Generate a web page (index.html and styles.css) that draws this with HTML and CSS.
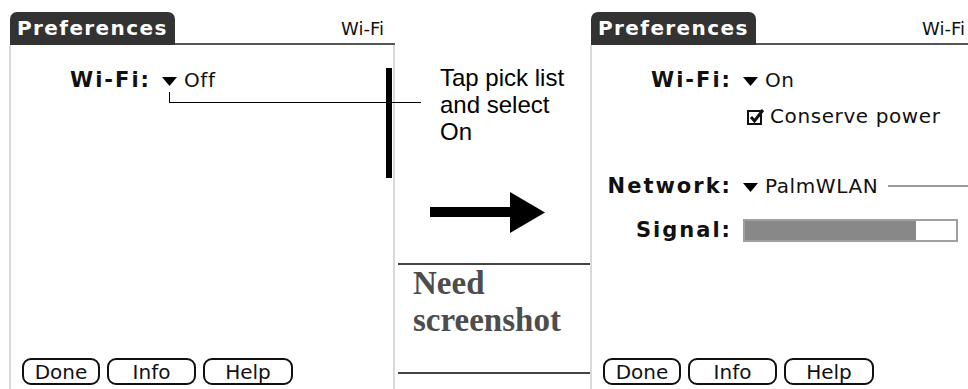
FILE: index.html
```html
<!DOCTYPE html>
<html lang="en">
    <head>
        <meta charset="UTF-8" />
        <title>Wi-Fi Preferences</title>
        <link rel="stylesheet" href="styles.css">
    </head>
    <body>
        <div id="stage">
            <!-- before: Wi-Fi off -->
            <div class="screen screen-left">
                <div class="titlebar">
                    <span class="tab">Preferences</span>
                    <span class="panel-name">Wi-Fi</span>
                </div>
                <div class="body">
                    <div class="form">
                        <span class="label">Wi-Fi:</span>
                        <span class="value picker"><svg class="pick" width="15" height="9" viewBox="0 0 15 9"><polygon points="0,0 15,0 7.5,9" /></svg>Off</span>
                    </div>
                    <div class="buttons">
                        <button class="btn btn-done">Done</button>
                        <button class="btn btn-info">Info</button>
                        <button class="btn btn-help">Help</button>
                    </div>
                </div>
            </div>

            <div class="middle">
                <p class="note">Tap pick list<br>and select<br>On</p>
                <svg class="big-arrow" width="115" height="41" viewBox="0 0 115 41">
                    <rect x="0" y="15" width="81" height="10" />
                    <polygon points="80,0 115,20.5 80,41" />
                </svg>
                <div class="placeholder">Need<br>screenshot</div>
            </div>

            <!-- after: Wi-Fi on -->
            <div class="screen screen-right">
                <div class="titlebar">
                    <span class="tab">Preferences</span>
                    <span class="panel-name">Wi-Fi</span>
                </div>
                <div class="body">
                    <div class="form form-full">
                        <span class="label">Wi-Fi:</span>
                        <span class="value picker"><svg class="pick" width="15" height="9" viewBox="0 0 15 9"><polygon points="0,0 15,0 7.5,9" /></svg>On</span>

                        <span class="value check">
                            <svg width="18" height="17" viewBox="0 0 18 17">
                                <rect x="1" y="3" width="13" height="13" fill="none" stroke="#111" stroke-width="2" />
                                <path d="M4 9 L7.5 13 L16 2" fill="none" stroke="#111" stroke-width="3" />
                            </svg>Conserve power</span>

                        <span class="label">Network:</span>
                        <span class="value picker"><svg class="pick" width="15" height="9" viewBox="0 0 15 9"><polygon points="0,0 15,0 7.5,9" /></svg>PalmWLAN<span class="rule"></span></span>

                        <span class="label">Signal:</span>
                        <span class="value"><span class="meter"><span class="meter-fill" style="width:81%"></span></span></span>
                    </div>
                    <div class="buttons">
                        <button class="btn btn-done">Done</button>
                        <button class="btn btn-info">Info</button>
                        <button class="btn btn-help">Help</button>
                    </div>
                </div>
            </div>

            <div class="callout-lead"></div>
            <div class="callout-bar"></div>
        </div>
    </body>
</html>
```

FILE: styles.css
```css
html, body {
    margin: 0;
    padding: 0;
    background: #fff;
}

#stage {
    position: relative;
    display: flex;
    width: 968px;
    height: 389px;
    overflow: hidden;
    font-family: "DejaVu Sans", sans-serif;
    color: #111;
}

    .screen {
        flex: none;
        width: 386px;
        height: 389px;
        box-sizing: border-box;
        padding-top: 12px;
        display: flex;
        flex-direction: column;
    }
    .screen-left {
        margin-left: 9px;
    }

    .titlebar {
        display: flex;
        justify-content: space-between;
        align-items: flex-start;
        height: 33px;
        box-sizing: border-box;
        margin-left: 1px;
        border-bottom: 2px solid #555;
    }
    .tab {
        height: 33px;
        line-height: 33px;
        padding: 0 7px;
        background: #333;
        color: #fff;
        font-weight: bold;
        font-size: 20px;
        letter-spacing: 1.4px;
        border-radius: 7px 7px 0 0;
    }
    .panel-name {
        font-size: 18px;
        line-height: 33px;
        padding-right: 11px;
    }

    .body {
        flex: 1;
        display: flex;
        flex-direction: column;
        border-left: 2px solid #d9d9d9;
        border-right: 2px solid #d9d9d9;
    }

    .form {
        flex: 1;
        display: grid;
        grid-template-columns: 138px auto;
        column-gap: 13px;
        align-content: start;
        padding-top: 23px;
    }
    .form-full {
        grid-template-rows: 36px 70px 44px 24px;
    }
    .label {
        font-weight: bold;
        font-size: 21px;
        line-height: 24px;
        letter-spacing: 2px;
        margin-right: -2px;
        text-align: right;
    }
    .value {
        grid-column: 2;
        display: flex;
        align-items: center;
        height: 24px;
        font-size: 20px;
        line-height: 24px;
        letter-spacing: 0.6px;
    }
    .picker .pick {
        margin-right: 7px;
        margin-top: 2px;
    }
    .check svg {
        margin: 0 5px 0 4px;
    }
    .rule {
        flex: 1;
        height: 2px;
        margin-left: 10px;
        background: #999;
    }
    .meter {
        width: 215px;
        height: 23px;
        box-sizing: border-box;
        border: 2px solid #a0a0a0;
        background: #fff;
    }
    .meter-fill {
        display: block;
        height: 100%;
        background: #888;
    }

    .buttons {
        display: flex;
        gap: 7px;
        padding-left: 11px;
        margin-bottom: 4px;
    }
    .btn {
        height: 27px;
        padding: 0;
        border: 2px solid #111;
        border-radius: 9px;
        background: #fff;
        color: #111;
        font-family: "DejaVu Sans", sans-serif;
        font-size: 20px;
        line-height: 22px;
    }
    .btn-done { width: 78px; }
    .btn-info { width: 89px; }
    .btn-help { width: 90px; }

    .middle {
        flex: none;
        width: 195px;
        display: flex;
        flex-direction: column;
    }
    .note {
        margin: 64px 0 0 45px;
        font-family: "Liberation Sans", sans-serif;
        font-size: 24px;
        line-height: 27px;
        color: #000;
    }
    .big-arrow {
        display: block;
        margin: 47px 0 0 35px;
    }
    .placeholder {
        margin: 30px 0 0 3px;
        padding: 0 0 33px 15px;
        border-top: 2px solid #444;
        border-bottom: 2px solid #444;
        font-family: "Liberation Serif", serif;
        font-weight: bold;
        font-size: 33px;
        line-height: 37px;
        color: #4d4d4d;
    }

    .callout-lead {
        position: absolute;
        left: 169px;
        top: 92px;
        width: 251px;
        height: 10px;
        border-left: 1px solid #000;
        border-bottom: 1px solid #000;
    }
    .callout-bar {
        position: absolute;
        left: 386px;
        top: 68px;
        width: 6px;
        height: 110px;
        background: #000;
    }
```
